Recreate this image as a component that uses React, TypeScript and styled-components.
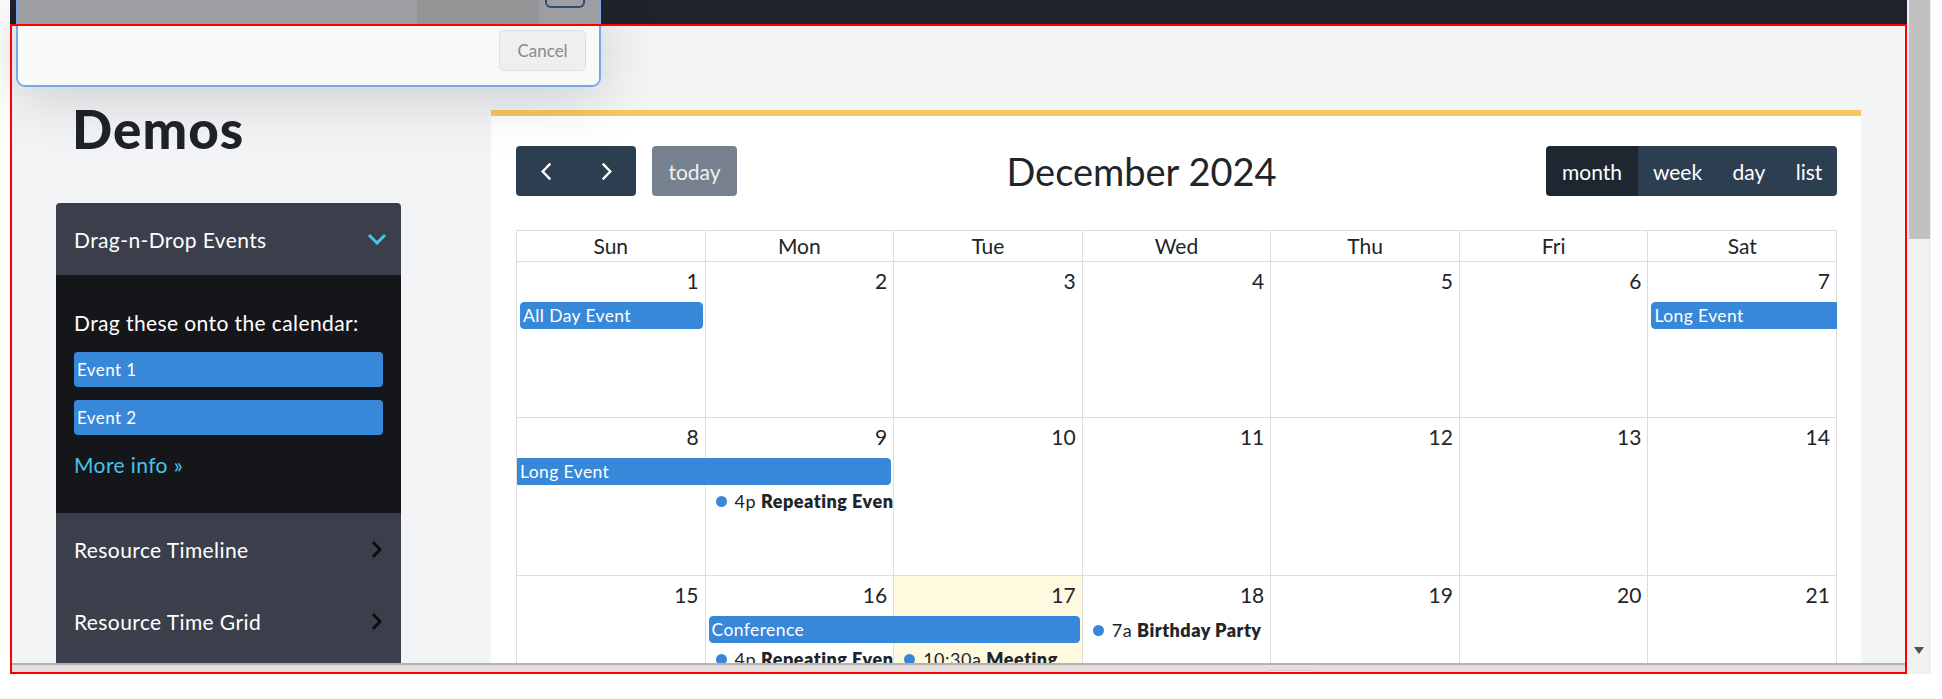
import styled, { createGlobalStyle } from "styled-components";

const GlobalStyle = createGlobalStyle`
  html, body {
    margin: 0;
    padding: 0;
    background: #fff;
    overflow: hidden;
  }
  body {
    font-family: Lato, "Noto Sans", sans-serif;
  }
  * { box-sizing: border-box; }
`;

const BLUE = "#3788d8";

type CalEvent =
  | { kind: "block"; col: number; span: number; row: number; title: string; fromPrev?: boolean; toNext?: boolean }
  | { kind: "dot"; col: number; row: number; time: string; title: string };

const weeks: { days: number[]; height: number; today?: number; events: CalEvent[] }[] = [
  {
    days: [1, 2, 3, 4, 5, 6, 7],
    height: 156,
    events: [
      { kind: "block", col: 1, span: 1, row: 2, title: "All Day Event" },
      { kind: "block", col: 7, span: 1, row: 2, title: "Long Event", toNext: true },
    ],
  },
  {
    days: [8, 9, 10, 11, 12, 13, 14],
    height: 158,
    events: [
      { kind: "block", col: 1, span: 2, row: 2, title: "Long Event", fromPrev: true },
      { kind: "dot", col: 2, row: 3, time: "4p", title: "Repeating Event" },
    ],
  },
  {
    days: [15, 16, 17, 18, 19, 20, 21],
    height: 160,
    today: 3,
    events: [
      { kind: "block", col: 2, span: 2, row: 2, title: "Conference" },
      { kind: "dot", col: 4, row: 2, time: "7a", title: "Birthday Party" },
      { kind: "dot", col: 2, row: 3, time: "4p", title: "Repeating Event" },
      { kind: "dot", col: 3, row: 3, time: "10:30a", title: "Meeting" },
    ],
  },
];

const dayNames = ["Sun", "Mon", "Tue", "Wed", "Thu", "Fri", "Sat"];
const views = [
  { label: "month", width: 92, active: true },
  { label: "week", width: 79 },
  { label: "day", width: 64 },
  { label: "list", width: 56 },
];

/* ---------- screenshot frame ---------- */

const Shot = styled.div`
  position: relative;
  width: 1942px;
  height: 699px;
  overflow: hidden;
  background: #fff;
`;

const Screen = styled.div`
  display: flex;
  height: 674px;
  padding-left: 10px;
`;

const Browser = styled.div`
  flex: 1;
  min-width: 0;
  display: flex;
  flex-direction: column;
`;

const TopNav = styled.div`
  flex: none;
  height: 24px;
  background: #1f232b;
`;

const HScroll = styled.div`
  flex: none;
  height: 11px;
  border-top: 2px solid #b2b2b2;
  background: #e6dddd;
  display: flex;
  align-items: flex-end;
`;

const HThumb = styled.div`
  margin-left: 1256px;
  width: 50px;
  height: 4px;
  background: #f3f0f0;
  border: 1px solid #d6cece;
  border-bottom: none;
  border-radius: 4px 4px 0 0;
`;

const VScroll = styled.div`
  flex: none;
  width: 35px;
  display: flex;
`;

const VTrack = styled.div`
  width: 24px;
  background: #f1f1f1;
  display: flex;
  flex-direction: column;
  justify-content: space-between;
  align-items: center;
`;

const VThumb = styled.div`
  width: 21px;
  height: 239px;
  background: #c1c1c1;
`;

const VArrow = styled.div`
  margin-bottom: 20px;
  width: 0;
  height: 0;
  border-left: 5px solid transparent;
  border-right: 5px solid transparent;
  border-top: 7px solid #505050;
`;

const RedFrame = styled.div`
  position: absolute;
  left: 10px;
  top: 24px;
  width: 1897px;
  height: 650px;
  border: 2px solid #ff0000;
  pointer-events: none;
  z-index: 3;
`;

/* ---------- modal left over the page ---------- */

const Modal = styled.div`
  position: absolute;
  left: 16px;
  top: 0;
  width: 585px;
  border: 2px solid #74a9e8;
  border-top: none;
  border-radius: 0 0 9px 9px;
  overflow: hidden;
  box-shadow: 0 10px 60px rgba(0, 0, 0, 0.17);
  z-index: 2;
`;

const ModalTop = styled.div`
  display: flex;
  height: 24px;
  background: #9d9ea2;
`;

const Shade = styled.div<{ $w: number; $dark?: boolean }>`
  width: ${(p) => p.$w}px;
  background: ${(p) => (p.$dark ? "#959597" : "#9d9ea2")};
`;

const CutButton = styled.div`
  margin-left: 6px;
  width: 40px;
  height: 8px;
  border: 2px solid #2f4d72;
  border-top: none;
  border-radius: 0 0 6px 6px;
`;

const ModalFooter = styled.div`
  display: flex;
  justify-content: flex-end;
  padding: 6px 13px 14px;
  background: #f9f9f9;
`;

const CancelButton = styled.button`
  width: 87px;
  height: 41px;
  border: 1px solid #dedede;
  border-radius: 5px;
  background: #efefef;
  color: #8a8a8a;
  font-family: Lato, "Noto Sans", sans-serif;
  font-size: 17px;
`;

/* ---------- page ---------- */

const Page = styled.div`
  flex: 1;
  min-height: 0;
  overflow: hidden;
  background: #f3f4f6;
  display: flex;
  align-items: flex-start;
  gap: 90px;
  padding: 72px 46px 0;
  font-family: Lato, "Noto Sans", sans-serif;
`;

const SideCol = styled.aside`
  flex: none;
  width: 345px;
`;

const Heading = styled.h1`
  margin: 2px 0 43px 16px;
  font-size: 53px;
  line-height: 62px;
  font-weight: 900;
  letter-spacing: 1px;
  color: #1f2228;
`;

const Accordion = styled.div`
  border-radius: 4px 4px 0 0;
  overflow: hidden;
  letter-spacing: 0.4px;
`;

const AccRow = styled.div<{ $right?: number }>`
  height: 72px;
  display: flex;
  align-items: center;
  justify-content: space-between;
  padding: 0 ${(p) => p.$right ?? 19}px 0 18px;
  background: #3a3f4b;
  color: #fff;
  font-size: 21px;
`;

const AccBody = styled.div`
  background: #15161a;
  padding: 33px 18px;
  color: #fff;
  font-size: 21px;
`;

const Intro = styled.div`
  line-height: 30px;
  margin-bottom: 14px;
`;

const DragEvent = styled.div`
  height: 35px;
  display: flex;
  align-items: center;
  padding-left: 3px;
  margin-bottom: 13px;
  background: ${BLUE};
  border-radius: 4px;
  font-size: 17px;
`;

const MoreInfo = styled.a`
  display: block;
  margin-top: 15px;
  line-height: 30px;
  color: #48c4e8;
  text-decoration: none;
`;

/* ---------- calendar ---------- */

const Card = styled.section`
  flex: 1;
  margin-top: 14px;
  background: #fff;
  border-top: 6px solid #f9c762;
  padding: 30px 24px 0 25px;
`;

const Toolbar = styled.div`
  display: flex;
  align-items: center;
  justify-content: space-between;
  height: 50px;
  margin-bottom: 34px;
`;

const Chunk = styled.div`
  display: flex;
  align-items: center;
  gap: 16px;
`;

const ButtonGroup = styled.div`
  display: flex;
  border-radius: 4px;
  overflow: hidden;
`;

const NavButton = styled.button`
  width: 60px;
  height: 50px;
  border: none;
  background: #2c3e50;
  display: flex;
  align-items: center;
  justify-content: center;
  padding: 0;
`;

const TodayButton = styled.button`
  width: 85px;
  height: 50px;
  border: none;
  border-radius: 4px;
  background: #76818d;
  color: #eef0f3;
  font-family: Lato, "Noto Sans", sans-serif;
  font-size: 21px;
  padding: 0;
`;

const Title = styled.h2`
  margin: 0;
  font-size: 38px;
  font-weight: 400;
  color: #212529;
`;

const ViewButton = styled.button<{ $w: number; $active?: boolean }>`
  width: ${(p) => p.$w}px;
  height: 50px;
  border: none;
  padding: 0;
  background: ${(p) => (p.$active ? "#1e2731" : "#2c3e50")};
  color: #fff;
  font-family: Lato, "Noto Sans", sans-serif;
  font-size: 21px;
`;

const Table = styled.div`
  border-top: 1px solid #ddd;
  border-left: 1px solid #ddd;
`;

const HeadRow = styled.div`
  display: grid;
  grid-template-columns: repeat(7, 1fr);
`;

const HeadCell = styled.div`
  border-right: 1px solid #ddd;
  border-bottom: 1px solid #ddd;
  text-align: center;
  font-size: 21px;
  line-height: 30px;
  color: #212529;
`;

const Week = styled.div<{ $h: number }>`
  display: grid;
  grid-template-columns: repeat(7, minmax(0, 1fr));
  grid-template-rows: 40px 29px 29px 1fr;
  height: ${(p) => p.$h}px;
`;

const DayCell = styled.div<{ $col: number; $today?: boolean }>`
  grid-column: ${(p) => p.$col};
  grid-row: 1 / -1;
  border-right: 1px solid #ddd;
  border-bottom: 1px solid #ddd;
  background: ${(p) => (p.$today ? "#fffadf" : "#fff")};
  text-align: right;
  padding: 4px 6px;
  font-size: 21px;
  line-height: 30px;
  color: #212529;
`;

const BlockEvent = styled.div<{ $col: number; $span: number; $row: number; $fromPrev?: boolean; $toNext?: boolean }>`
  grid-column: ${(p) => p.$col} / span ${(p) => p.$span};
  grid-row: ${(p) => p.$row};
  align-self: start;
  z-index: 1;
  height: 27px;
  margin-left: ${(p) => (p.$fromPrev ? 0 : 3)}px;
  margin-right: ${(p) => (p.$toNext ? 0 : 3)}px;
  padding-left: 2px;
  border: 1px solid ${BLUE};
  border-radius: ${(p) => (p.$fromPrev ? "0 4px 4px 0" : p.$toNext ? "4px 0 0 4px" : "4px")};
  background: ${BLUE};
  color: #fff;
  font-size: 17.5px;
  letter-spacing: 0.4px;
  line-height: 25px;
  white-space: nowrap;
  overflow: hidden;
`;

const DotEvent = styled.div<{ $col: number; $row: number }>`
  grid-column: ${(p) => p.$col};
  grid-row: ${(p) => p.$row};
  align-self: start;
  z-index: 1;
  display: flex;
  align-items: center;
  height: 28px;
  margin: 0 1px 0 3px;
  padding-left: 7px;
  font-size: 18px;
  letter-spacing: 0.5px;
  color: #212529;
  white-space: nowrap;
  overflow: hidden;
`;

const Dot = styled.span`
  flex: none;
  width: 11px;
  height: 11px;
  border-radius: 50%;
  background: ${BLUE};
  margin-right: 8px;
`;

const Time = styled.span`
  margin-right: 5px;
`;

const EventTitle = styled.b`
  font-weight: 800;
`;

function Chevron({ dir, color, w, h, sw = 2.5 }: { dir: "left" | "right" | "down"; color: string; w: number; h: number; sw?: number }) {
  const m = sw / 2 + 0.5;
  let d = "";
  if (dir === "left") d = `M${w - m} ${m} L${m} ${h / 2} L${w - m} ${h - m}`;
  if (dir === "right") d = `M${m} ${m} L${w - m} ${h / 2} L${m} ${h - m}`;
  if (dir === "down") d = `M${m} ${m} L${w / 2} ${h - m} L${w - m} ${m}`;
  return (
    <svg width={w} height={h} viewBox={`0 0 ${w} ${h}`}>
      <path d={d} fill="none" stroke={color} strokeWidth={sw} />
    </svg>
  );
}

export default function App() {
  return (
    <Shot>
      <GlobalStyle />
      <Screen>
        <Browser>
          <TopNav />
          <Page>
            <SideCol>
              <Heading>Demos</Heading>
              <Accordion>
                <AccRow $right={14}>
                  <span>Drag-n-Drop Events</span>
                  <Chevron dir="down" color="#48c4e8" w={20} h={12} sw={3} />
                </AccRow>
                <AccBody>
                  <Intro>Drag these onto the calendar:</Intro>
                  <DragEvent>Event 1</DragEvent>
                  <DragEvent>Event 2</DragEvent>
                  <MoreInfo href="#">More info »</MoreInfo>
                </AccBody>
                <AccRow>
                  <span>Resource Timeline</span>
                  <Chevron dir="right" color="#0d0d0d" w={11} h={19} sw={3} />
                </AccRow>
                <AccRow>
                  <span>Resource Time Grid</span>
                  <Chevron dir="right" color="#0d0d0d" w={11} h={19} sw={3} />
                </AccRow>
                {/* next item continues under the scrollbar */}
                <AccRow />
              </Accordion>
            </SideCol>

            <Card>
              <Toolbar>
                <Chunk>
                  <ButtonGroup>
                    <NavButton aria-label="prev">
                      <Chevron dir="left" color="#fff" w={11} h={19} sw={2.4} />
                    </NavButton>
                    <NavButton aria-label="next">
                      <Chevron dir="right" color="#fff" w={11} h={19} sw={2.4} />
                    </NavButton>
                  </ButtonGroup>
                  <TodayButton>today</TodayButton>
                </Chunk>
                <Title>December 2024</Title>
                <ButtonGroup>
                  {views.map((v) => (
                    <ViewButton key={v.label} $w={v.width} $active={v.active}>
                      {v.label}
                    </ViewButton>
                  ))}
                </ButtonGroup>
              </Toolbar>

              <Table>
                <HeadRow>
                  {dayNames.map((n) => (
                    <HeadCell key={n}>{n}</HeadCell>
                  ))}
                </HeadRow>
                {weeks.map((w, wi) => (
                  <Week key={wi} $h={w.height}>
                    {w.days.map((d, i) => (
                      <DayCell key={d} $col={i + 1} $today={w.today === i + 1}>
                        {d}
                      </DayCell>
                    ))}
                    {w.events.map((e, ei) =>
                      e.kind === "block" ? (
                        <BlockEvent
                          key={ei}
                          $col={e.col}
                          $span={e.span}
                          $row={e.row}
                          $fromPrev={e.fromPrev}
                          $toNext={e.toNext}
                        >
                          {e.title}
                        </BlockEvent>
                      ) : (
                        <DotEvent key={ei} $col={e.col} $row={e.row}>
                          <Dot />
                          <Time>{e.time}</Time>
                          <EventTitle>{e.title}</EventTitle>
                        </DotEvent>
                      )
                    )}
                  </Week>
                ))}
              </Table>
            </Card>
          </Page>
          <HScroll>
            <HThumb />
          </HScroll>
        </Browser>
        <VScroll>
          <VTrack>
            <VThumb />
            <VArrow />
          </VTrack>
        </VScroll>
      </Screen>

      <Modal>
        <ModalTop>
          <Shade $w={399} />
          <Shade $w={122} $dark />
          <CutButton />
        </ModalTop>
        <ModalFooter>
          <CancelButton>Cancel</CancelButton>
        </ModalFooter>
      </Modal>
      <RedFrame />
    </Shot>
  );
}
